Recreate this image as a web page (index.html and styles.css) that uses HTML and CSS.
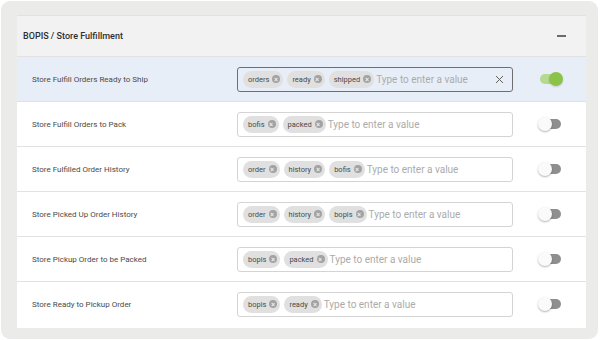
FILE: index.html
```html
<!doctype html>
<html lang="en">
  <head>
    <meta charset="UTF-8" />
    <title>BOPIS / Store Fulfillment</title>
    <link rel="stylesheet" href="styles.css">
  </head>
  <body>
    <div class="frame">
      <div class="panel">
        <div class="panel-header">
          <span class="panel-title">BOPIS / Store Fulfillment</span>
          <span class="collapse"></span>
        </div>

        <div class="row active">
          <div class="row-label">Store Fulfill Orders Ready to Ship</div>
          <div class="tag-input focused">
            <span class="chip">orders<i class="chip-x"></i></span>
            <span class="chip">ready<i class="chip-x"></i></span>
            <span class="chip">shipped<i class="chip-x"></i></span>
            <span class="placeholder">Type to enter a value</span>
            <svg class="clear" width="9" height="9" viewBox="0 0 9 9">
              <path d="M1 1L8 8M8 1L1 8" stroke="#5f5f5f" stroke-width="1" fill="none" />
            </svg>
          </div>
          <div class="toggle on"><span class="thumb"></span></div>
        </div>

        <div class="row">
          <div class="row-label">Store Fulfill Orders to Pack</div>
          <div class="tag-input">
            <span class="chip">bofis<i class="chip-x"></i></span>
            <span class="chip">packed<i class="chip-x"></i></span>
            <span class="placeholder">Type to enter a value</span>
          </div>
          <div class="toggle"><span class="thumb"></span></div>
        </div>

        <div class="row">
          <div class="row-label">Store Fulfilled Order History</div>
          <div class="tag-input">
            <span class="chip">order<i class="chip-x"></i></span>
            <span class="chip">history<i class="chip-x"></i></span>
            <span class="chip">bofis<i class="chip-x"></i></span>
            <span class="placeholder">Type to enter a value</span>
          </div>
          <div class="toggle"><span class="thumb"></span></div>
        </div>

        <div class="row">
          <div class="row-label">Store Picked Up Order History</div>
          <div class="tag-input">
            <span class="chip">order<i class="chip-x"></i></span>
            <span class="chip">history<i class="chip-x"></i></span>
            <span class="chip">bopis<i class="chip-x"></i></span>
            <span class="placeholder">Type to enter a value</span>
          </div>
          <div class="toggle"><span class="thumb"></span></div>
        </div>

        <div class="row">
          <div class="row-label">Store Pickup Order to be Packed</div>
          <div class="tag-input">
            <span class="chip">bopis<i class="chip-x"></i></span>
            <span class="chip">packed<i class="chip-x"></i></span>
            <span class="placeholder">Type to enter a value</span>
          </div>
          <div class="toggle"><span class="thumb"></span></div>
        </div>

        <div class="row">
          <div class="row-label">Store Ready to Pickup Order</div>
          <div class="tag-input">
            <span class="chip">bopis<i class="chip-x"></i></span>
            <span class="chip">ready<i class="chip-x"></i></span>
            <span class="placeholder">Type to enter a value</span>
          </div>
          <div class="toggle"><span class="thumb"></span></div>
        </div>
      </div>
    </div>
  </body>
</html>
```

FILE: styles.css
```css
:root {
  --frame-bg: #ebebe9;
  --header-bg: #f2f2f2;
  --active-bg: #e8eef7;
  --border-color: #e2e2e2;
  --input-border: #d4d4d4;
  --text-color: #4a4a4a;
  --text-muted: #ababab;
  --chip-bg: #e0e0e0;
  --chip-icon: #a3a3a3;
  --green: #8bc34a;
  --green-light: #b5d98e;
}

* {
  margin: 0;
  padding: 0;
  box-sizing: border-box;
}

body {
  background: #ffffff;
  font-family: Roboto, 'Liberation Sans', sans-serif;
  color: var(--text-color);
  width: 600px;
  height: 340px;
  overflow: hidden;
}

.frame {
  margin: 1px 0 0 1px;
  width: 597px;
  height: 338px;
  background: var(--frame-bg);
  border-radius: 9px;
  padding: 14px 12px 11px 16px;
}

.panel {
  background: #ffffff;
  border-top: 1px solid var(--border-color);
  height: 100%;
  display: flex;
  flex-direction: column;
}

.panel-header {
  height: 40px;
  background: var(--header-bg);
  display: flex;
  align-items: center;
  justify-content: space-between;
  padding: 0 20px 0 6px;
}

.panel-title {
  font-size: 9px;
  font-weight: 500;
  color: #2e2e2e;
}

.collapse {
  width: 9px;
  height: 1.5px;
  background: #6a6a6a;
}

.row {
  height: 45px;
  display: flex;
  align-items: center;
  border-top: 1px solid var(--border-color);
  padding-left: 15px;
}

.row:first-of-type {
  border-top: none;
}

.row.active {
  background: var(--active-bg);
}

.row-label {
  width: 205px;
  font-size: 8px;
  color: var(--text-color);
}

.tag-input {
  width: 276px;
  height: 25px;
  display: flex;
  align-items: center;
  gap: 4px;
  padding: 0 5px;
  border: 1px solid var(--input-border);
  border-radius: 3px;
  background: #ffffff;
}

.tag-input.focused {
  border-color: #6e6e6e;
  background: transparent;
}

.chip {
  display: inline-flex;
  align-items: center;
  gap: 3px;
  height: 17px;
  padding: 0 3px 0 5px;
  border-radius: 9px;
  background: var(--chip-bg);
  font-size: 7.5px;
  color: #4a4a4a;
}

.chip-x {
  position: relative;
  width: 8px;
  height: 8px;
  border-radius: 50%;
  background: var(--chip-icon);
}

.chip-x::before,
.chip-x::after {
  content: '';
  position: absolute;
  left: 1.8px;
  top: 3.5px;
  width: 4.4px;
  height: 1px;
  background: #e8e8e8;
  transform: rotate(45deg);
}

.chip-x::after {
  transform: rotate(-45deg);
}

.placeholder {
  margin-left: -2px;
  font-size: 10px;
  color: var(--text-muted);
  flex: 1;
}

.clear {
  margin-right: 3px;
}

.toggle {
  position: relative;
  margin-left: 27px;
  width: 21px;
  height: 10px;
  border-radius: 5px;
  background: #8f8f8f;
}

.toggle .thumb {
  position: absolute;
  top: -2px;
  left: -2px;
  width: 14px;
  height: 14px;
  border-radius: 50%;
  background: #fafafa;
  box-shadow: 0 1px 2px rgba(0, 0, 0, 0.3);
}

.toggle.on {
  background: var(--green-light);
}

.toggle.on .thumb {
  left: auto;
  right: -2px;
  background: var(--green);
  box-shadow: 0 1px 2px rgba(0, 0, 0, 0.15);
}
```
